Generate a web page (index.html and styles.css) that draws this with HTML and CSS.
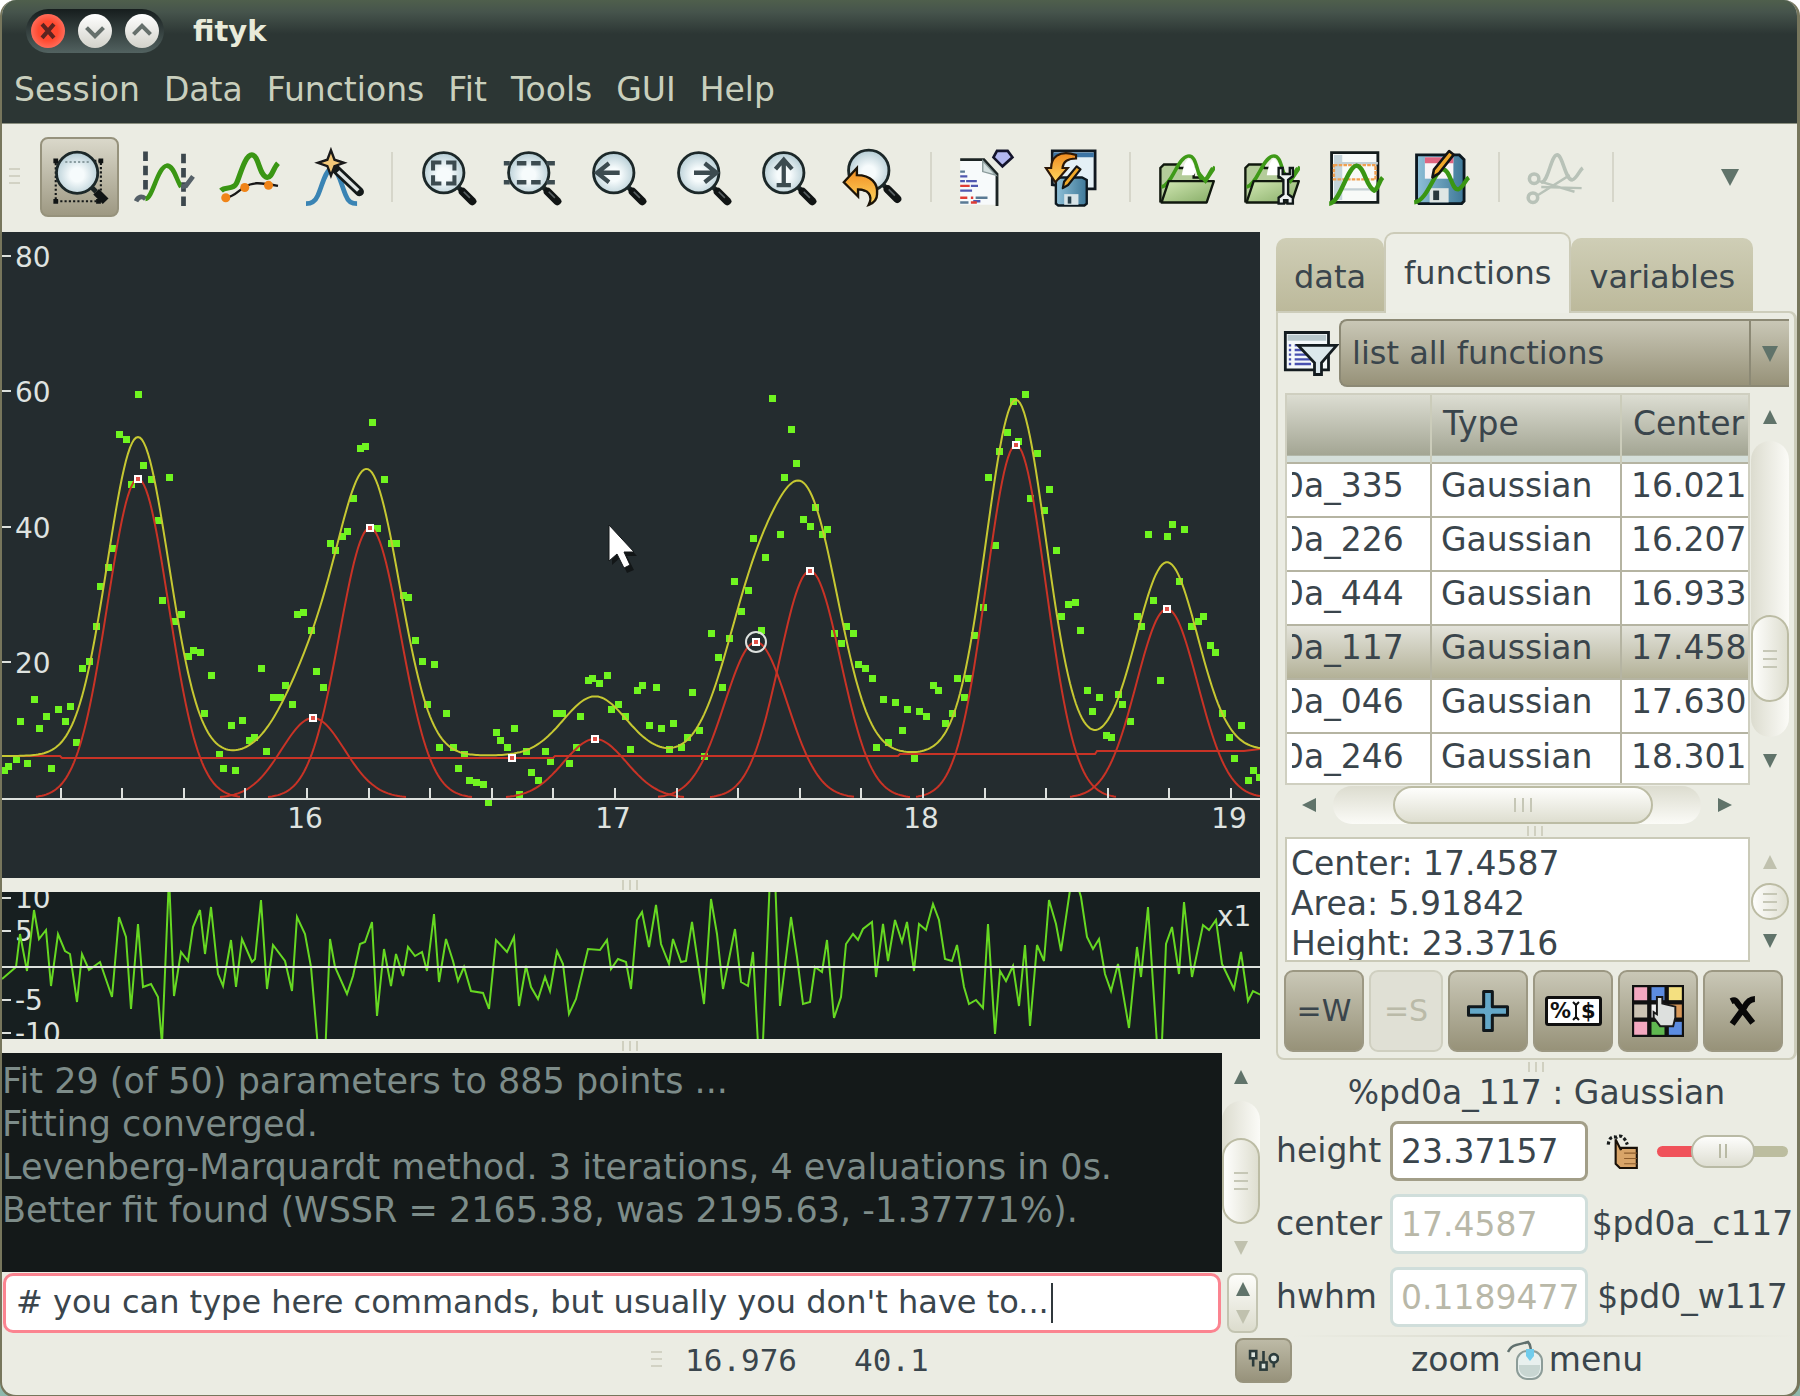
FILE: index.html
```html
<!DOCTYPE html>
<html lang="en">
<head>
    <meta charset="UTF-8">
    <meta name="viewport" content="width=device-width, initial-scale=1.0">
    <title>fityk</title>
    <link rel="stylesheet" href="styles.css">
</head>
<body>
    <!-- shared icon parts -->
    <svg class="defs" width="0" height="0" aria-hidden="true">
        <defs>
            <radialGradient id="glass" cx="50%" cy="55%" r="55%">
                <stop offset="0.3" stop-color="#f6fbfc"/>
                <stop offset="1" stop-color="#b4ccd4"/>
            </radialGradient>
            <linearGradient id="orange" x1="0" y1="0" x2="0" y2="1">
                <stop offset="0" stop-color="#f08a20"/>
                <stop offset="1" stop-color="#ffd860"/>
            </linearGradient>
            <linearGradient id="folder" x1="0" y1="0" x2="1" y2="1">
                <stop offset="0" stop-color="#d2e8b4"/>
                <stop offset="1" stop-color="#86ac66"/>
            </linearGradient>
            <linearGradient id="steel" x1="0" y1="0" x2="1" y2="0">
                <stop offset="0" stop-color="#8fc0d8"/>
                <stop offset="1" stop-color="#3e7898"/>
            </linearGradient>
            <symbol id="lens" viewBox="0 0 24 24">
                <path d="M16 16l2 2" stroke="#1c2424" stroke-width="2"/>
                <path d="M18 18l4 4" stroke="#101414" stroke-width="3.4" stroke-linecap="round"/>
                <path d="M18.4 18l2.6 2.6" stroke="#5a6264" stroke-width="0.7"/>
                <circle cx="10" cy="10" r="8.5" fill="url(#glass)" stroke="#1c2829" stroke-width="1.2"/>
            </symbol>
            <symbol id="open" viewBox="0 0 24 24">
                <path d="M1 22V8l1.500-1.500h5.500l1 1.500h6v4h3v10z" fill="#b4cc9a" stroke="#10180e" stroke-width="1"/>
                <path d="M10 11q1-6 3-7 2 1 3 5.500l-1 1.500z" fill="#fff"/>
                <path d="M1.500 16C6 15 8 4 12.500 3S16 13 19.500 13c1.500-.5 2-3 3.500-5" fill="none" stroke="#3f9a18" stroke-width="1.500"/>
                <path d="M4.500 13.500h19l-3 9H1.500z" fill="url(#folder)" stroke="#10180e" stroke-width="1" stroke-linejoin="round"/>
                <path d="M17 10l3 3.500 4-6" fill="none" stroke="#3f9a18" stroke-width="1.500"/>
            </symbol>
            <symbol id="pencil" viewBox="0 0 10 12">
                <path d="M1 11l.6-3L7.500.8l1.800 1.400L3.500 9.500z" fill="#f0a828" stroke="#141414" stroke-width="1" stroke-linejoin="round"/>
            </symbol>
        </defs>
    </svg>

    <div class="window">
        <header class="titlebar">
            <div class="winbuttons">
                <button class="wb close" aria-label="Close"><svg viewBox="0 0 20 20"><path d="M6.500 6l7 8M13.500 6l-7 8"/></svg></button>
                <button class="wb" aria-label="Minimize"><svg viewBox="0 0 20 20"><path d="M5 8l5 5 5-5"/></svg></button>
                <button class="wb" aria-label="Maximize"><svg viewBox="0 0 20 20"><path d="M5 12l5-5 5 5"/></svg></button>
            </div>
            <h1>fityk</h1>
        </header>
        <nav class="menubar">
            <button>Session</button>
            <button>Data</button>
            <button>Functions</button>
            <button>Fit</button>
            <button>Tools</button>
            <button>GUI</button>
            <button>Help</button>
        </nav>

        <div class="toolbar">
            <span class="grip-v"></span>
            <button class="tool active" aria-label="Zoom mode"><svg viewBox="0 0 24 24">
                <rect x="2" y="5" width="19" height="17" fill="none" stroke="#141818" stroke-width="0.900" stroke-dasharray="0.9 0.9"/>
                <path d="M17 16l2 2" stroke="#1c2424" stroke-width="2"/>
                <path d="M19 18l4 4" stroke="#101414" stroke-width="3.400"/>
                <circle cx="11" cy="10" r="8.700" fill="url(#glass)" stroke="#1c2829" stroke-width="1.200"/>
                <path d="M6 5.500h10" stroke="#8a9ca0" stroke-width="0.800" stroke-dasharray="0.9 0.9"/>
                <path d="M1 4h2v2H1zM20 4h2v2h-2zM1 21h2v2H1zM19 21h2v2h-2z" fill="#101414"/>
            </svg></button>
            <button class="tool" aria-label="Range mode"><svg viewBox="0 0 24 24">
                <path d="M4 1v18M20 2v22" stroke="#3c474d" stroke-width="2" stroke-dasharray="4 2"/>
                <path d="M0 22q1.500-3 4-1" fill="none" stroke="#556068" stroke-width="2"/>
                <path d="M4 21c3 0 5-13.500 9-14 3 0 4 6 6 9" fill="none" stroke="#3a9614" stroke-width="1.900"/>
                <path d="M19 16l2-.5L24 11.500" fill="none" stroke="#556068" stroke-width="2"/>
            </svg></button>
            <button class="tool" aria-label="Baseline mode"><svg viewBox="0 0 24 24">
                <path d="M0 17.500c2-2 5 0 6.500-3S10 2.500 13 2.500s3 9 6.500 9.500c2 0 2.500-4 4.500-6" fill="none" stroke="#3a9614" stroke-width="2.200"/>
                <path d="M2 20.500c4-.5 5-3 8-4.500 3-2 6-2 14-.5" fill="none" stroke="#181818" stroke-width="1"/>
                <g fill="#f08418"><circle cx="2" cy="20.500" r="1.900"/><circle cx="10" cy="16.200" r="1.900"/><circle cx="20" cy="15.300" r="1.900"/></g>
            </svg></button>
            <button class="tool" aria-label="Add peak"><svg viewBox="0 0 24 24">
                <path d="M0 23q3.500 0 5-3.500C7 15 8 9 11 8c3 1 4 8 6 12q1 3 4.500 3" fill="none" stroke="#3a84b4" stroke-width="2"/>
                <path d="M12 8l10.500 10" stroke="#141a1a" stroke-width="3.800" stroke-linecap="round"/>
                <path d="M13.500 9.500l8.500 8" stroke="#dfe5e4" stroke-width="1.500"/>
                <path d="M10.500 0.500L12 4.500l4 1.300-4 1.400-1.500 4-1.500-4-4-1.400 4-1.300z" fill="#f4c878" stroke="#1a1a1a" stroke-width="1"/>
            </svg></button>
            <span class="sep"></span>
            <button class="tool" aria-label="Whole"><svg viewBox="0 0 24 24"><use href="#lens"/>
                <path d="M5.500 9V5.700H9M11 5.700h3.500V9M14.500 11v3.500H11M9 14.500H5.500V11" fill="none" stroke="#3c4b50" stroke-width="1.700"/></svg></button>
            <button class="tool" aria-label="Vertical fit"><svg viewBox="0 0 24 24"><use href="#lens"/>
                <path d="M-.5 6h2.500M5 6h4M11 6h4M17.500 6H21M-.5 14h2.500M5 14h4M11 14h4M17.500 14H21" stroke="#3c4b50" stroke-width="1.800"/></svg></button>
            <button class="tool" aria-label="Scroll left"><svg viewBox="0 0 24 24"><use href="#lens"/>
                <path d="M12.500 10H4M8 6l-5 4 5 4" fill="none" stroke="#3c4b50" stroke-width="1.800"/></svg></button>
            <button class="tool" aria-label="Scroll right"><svg viewBox="0 0 24 24"><use href="#lens"/>
                <path d="M8 10h8.500M12.500 6l5 4-5 4" fill="none" stroke="#3c4b50" stroke-width="1.800"/></svg></button>
            <button class="tool" aria-label="Extend zoom"><svg viewBox="0 0 24 24"><use href="#lens"/>
                <path d="M10 15V5M6.500 8.500L10 4.500l3.500 4M7 15.200h6" fill="none" stroke="#3c4b50" stroke-width="1.800"/></svg></button>
            <button class="tool" aria-label="Previous zoom"><svg viewBox="0 0 24 24"><use href="#lens" y="-1"/>
                <path d="M-.5 14L5 8v3c6 0 9 3.500 8.500 8 0 2-1 3.500-3.500 4.500C12 19.500 9.500 17 5.500 17v3z" fill="url(#orange)" stroke="#1c1408" stroke-width="1"/></svg></button>
            <span class="sep"></span>
            <button class="tool" aria-label="Execute script"><svg viewBox="0 0 24 24">
                <path d="M.5 4.500H11l5 5.500v13.500H.5z" fill="#f7fafb"/>
                <path d="M.5 4.500H10.500l5.500 6v13.500" fill="none" stroke="#1c2424" stroke-width="1.200"/>
                <path d="M10 5v4.500l5.500 1.500z" fill="#d4e0e0" stroke="#8a9a9a" stroke-width=".6"/>
                <path d="M.5 11.500h3M3 13.500h4.500M.500 13.500h2M5 15.500h3M.5 17.500h5M6 22h3" stroke="#5058b0" stroke-width="1"/>
                <path d="M.5 15.500h4M.5 20.500h3M5 20.500h1M5 22.500h2.500" stroke="#e03c34" stroke-width="1"/>
                <path d="M.5 9.500h2M.5 22.500h3.500M7 20.500h5" stroke="#5a7a94" stroke-width="1"/>
                <path d="M16 .8h4.500l2 2.700-4.200 3.800-3.800-3.800z" fill="#b4b8f0" stroke="#14142c" stroke-width="1.100"/>
            </svg></button>
            <button class="tool" aria-label="Save session"><svg viewBox="0 0 24 24">
                <path d="M3.500.800h18v16H18L3.500 15z" fill="#e4f0f6" stroke="#101820" stroke-width="1.200"/>
                <path d="M4 1.500h17v2H4z" fill="#3c74a4"/>
                <path d="M5 13l2-1h9l2 1v10l-1 .8H6L5 23z" fill="url(#steel)" stroke="#0c1820" stroke-width="1"/>
                <path d="M8.500 19h6v4.500h-6z" fill="#d8e4e8"/><path d="M10 20h1.500v3H10z" fill="#28404c"/>
                <path d="M13.500 2.500C6 0 3 4 3 8H.8l4 6L10 8H7.800C8 5.500 10 4 13.500 4z" fill="url(#orange)" stroke="#2c1808" stroke-width=".9"/>
                <use href="#pencil" x="7" y="6.500" width="9" height="11"/>
            </svg></button>
            <span class="sep"></span>
            <button class="tool" aria-label="Load file"><svg viewBox="0 0 24 24"><use href="#open"/></svg></button>
            <button class="tool" aria-label="Load file (custom)"><svg viewBox="0 0 24 24"><use href="#open"/>
                <path d="M15 8v3.500l2 1.500v6l-2 1.500V23h2.300v-1.500h1.400V23H21v-2.500L19 19v-6l2-1.500V8h-1.300v2.500h-3V8z" fill="#eef2f2" stroke="#101818" stroke-width="1"/></svg></button>
            <button class="tool" aria-label="Edit data"><svg viewBox="0 0 24 24">
                <path d="M1.500 1.500H21v21H1.500z" fill="#f8faf8" stroke="#141c1c" stroke-width="1.200"/>
                <path d="M2.500 2.500h3.500v19H2.500z" fill="#c4d4da"/>
                <path d="M3 6h18M6 17h15" stroke="#c4d0d4" stroke-width="1"/>
                <path d="M2.500 6.800h17.500v6H2.500z" fill="none" stroke="#f0a050" stroke-width="1" stroke-dasharray="1.500 .5"/>
                <path d="M.5 23C5 23 8 7.500 12 7c3.500.5 4 9 7.500 10.500 1.500-.5 2-4 3.500-5.500" fill="none" stroke="#3a9614" stroke-width="1.900"/>
            </svg></button>
            <button class="tool" aria-label="Save data"><svg viewBox="0 0 24 24">
                <path d="M1.500 2.500h18l2 2v17.500l-1 1H2.500l-1-1z" fill="url(#steel)" stroke="#0c1820" stroke-width="1.200"/>
                <path d="M5 3.500h12v9H5z" fill="#f8f4f6"/><path d="M5 3.500h12v2.500H5z" fill="#e06480"/>
                <path d="M7 16.500h8v6H7z" fill="#dfe6e4"/><path d="M8.500 17.500H11v4H8.500z" fill="#28383c"/>
                <path d="M.5 22.500C6 22 9 9 12.500 8.500 16 9 16 17 19 17c2-.5 3-4 4.500-5" fill="none" stroke="#3a9614" stroke-width="1.800"/>
                <use href="#pencil" x="7" y="0" width="11" height="13"/>
            </svg></button>
            <span class="sep"></span>
            <button class="tool" aria-label="Strip background" disabled><svg viewBox="0 0 24 24" fill="none" stroke="#b8c2b8" stroke-width="1.500">
                <path d="M6 14c3 0 4-11 6.500-11.500S16 13 19 13c2-.5 3-4 4.500-5"/>
                <circle cx="3" cy="12.500" r="2"/><circle cx="2.500" cy="20.500" r="2"/>
                <path d="M5 13.500L20 18M4.500 19.500L18 11M6 16l17 .5" stroke-width="1"/>
            </svg></button>
            <span class="sep"></span>
            <button class="overflow" aria-label="More tools"><i class="tri down"></i></button>
        </div>

        <main class="main">
            <section class="left">
                <svg class="plot" id="plot" viewBox="2 232 1258 646"></svg>
                <div class="sash"><span class="grip"></span></div>
                <svg class="plot resid" id="resid" viewBox="2 892 1258 147"></svg>
                <div class="sash"><span class="grip"></span></div>
                <div class="console">
                    <pre class="log">Fit 29 (of 50) parameters to 885 points ...
Fitting converged.
Levenberg-Marquardt method. 3 iterations, 4 evaluations in 0s.
Better fit found (WSSR = 2165.38, was 2195.63, -1.37771%).</pre>
                    <div class="vscroll log-scroll">
                        <button aria-label="Scroll up"><i class="tri up"></i></button>
                        <div class="track"><div class="thumb"></div></div>
                        <button aria-label="Scroll down" disabled><i class="tri down"></i></button>
                    </div>
                </div>
                <div class="command">
                    <div class="entry">
                        <input type="text" aria-label="Command" value="# you can type here commands, but usually you don't have to...">
                        <span class="caret"></span>
                    </div>
                    <div class="spin">
                        <button aria-label="Previous command"><i class="tri up"></i></button>
                        <button aria-label="Next command" disabled><i class="tri down"></i></button>
                    </div>
                </div>
            </section>

            <aside class="side">
                <div class="tabs">
                    <button class="tab">data</button>
                    <button class="tab selected">functions</button>
                    <button class="tab">variables</button>
                </div>
                <div class="panel">
                    <div class="filter">
                        <svg viewBox="0 0 24 20">
                            <path d="M1 1h18.500v16H1z" fill="#f4f8fa" stroke="#141c20" stroke-width="1.200"/>
                            <path d="M2 2h16.500v2.500H2z" fill="#b8c8cc"/>
                            <path d="M2.500 6.500h1M2.500 8.500h1M2.500 10.500h1M2.500 12.500h1M2.500 14.500h1M5 6.500h7M5 8.500h5M5 10.500h5M5 12.500h7M5 14.500h7" stroke="#4850b0" stroke-width="1"/>
                            <path d="M6.500 6.500h16.500l-6.500 7.500v5h-3v-5z" fill="#dce8ec" stroke="#141c20" stroke-width="1.200"/>
                        </svg>
                        <div class="combo">
                            <select aria-label="Function filter"><option>list all functions</option></select>
                            <i class="tri down"></i>
                        </div>
                    </div>
                    <div class="listrow">
                        <div class="list">
                            <table>
                                <thead><tr><th class="c-name"></th><th class="c-type">Type</th><th>Center</th></tr></thead>
                                <tbody>
                                    <tr><td><span>0a_335</span></td><td>Gaussian</td><td>16.021</td></tr>
                                    <tr><td><span>0a_226</span></td><td>Gaussian</td><td>16.207</td></tr>
                                    <tr><td><span>0a_444</span></td><td>Gaussian</td><td>16.933</td></tr>
                                    <tr class="sel"><td><span>0a_117</span></td><td>Gaussian</td><td>17.458</td></tr>
                                    <tr><td><span>0a_046</span></td><td>Gaussian</td><td>17.630</td></tr>
                                    <tr><td><span>0a_246</span></td><td>Gaussian</td><td>18.301</td></tr>
                                </tbody>
                            </table>
                        </div>
                        <div class="vscroll list-scroll">
                            <button aria-label="Scroll up"><i class="tri up"></i></button>
                            <div class="track"><div class="thumb"></div></div>
                            <button aria-label="Scroll down"><i class="tri down"></i></button>
                        </div>
                    </div>
                    <div class="hscroll">
                        <button aria-label="Scroll left"><i class="tri left"></i></button>
                        <div class="track"><div class="thumb"></div></div>
                        <button aria-label="Scroll right"><i class="tri right"></i></button>
                    </div>
                    <div class="sash"><span class="grip"></span></div>
                    <div class="listrow">
                        <div class="info">
                            <div>Center: 17.4587</div>
                            <div>Area: 5.91842</div>
                            <div>Height: 23.3716</div>
                        </div>
                        <div class="vscroll info-scroll">
                            <button aria-label="Scroll up" disabled><i class="tri up"></i></button>
                            <div class="track"><div class="thumb"></div></div>
                            <button aria-label="Scroll down"><i class="tri down"></i></button>
                        </div>
                    </div>
                    <div class="actions">
                        <button>=W</button>
                        <button class="same" disabled>=S</button>
                        <button aria-label="Add"><svg viewBox="0 0 24 24"><path d="M10 3h4v7h7v4h-7v7h-4v-7H3v-4h7z" fill="#64a8c8" stroke="#10181c" stroke-width="1.400" stroke-linejoin="round"/></svg></button>
                        <button aria-label="Rename"><svg class="rename" viewBox="0 0 57 30"><rect x="1.500" y="1.500" width="54" height="27" rx="2" fill="#fff" stroke="#101010" stroke-width="3"/><text x="5" y="22">%</text><path d="M28 6l3 3 3-3M28 24l3-3 3 3M31 8v14" fill="none" stroke="#101010" stroke-width="2"/><text x="36" y="22">$</text></svg></button>
                        <button aria-label="Colors"><svg viewBox="0 0 24 24">
                            <path d="M0 0h24v24H0z" fill="#101010"/>
                            <path d="M1 1h6v6H1zM1 17h6v6H1z" fill="#f4a8c0"/><path d="M9 1h6v6H9z" fill="#5c8ce0"/><path d="M17 1h6v6h-6z" fill="#f4e080"/>
                            <path d="M1 9h6v6H1z" fill="#ccc4b4"/><path d="M9 9h6v6H9z" fill="#f0f0f0"/><path d="M17 9h6v6h-6z" fill="#d89858"/><path d="M9 17h6v6H9z" fill="#60b850"/><path d="M17 17h6v6h-6z" fill="#5c8ce0"/>
                            <path d="M11.500 5.500v8l-1.500-1v2.500l3 4h6l1-4v-5l-2-.5-2-.5-2-.5V5.500z" fill="#dde0de" stroke="#181818" stroke-width=".9"/>
                        </svg></button>
                        <button aria-label="Delete"><svg viewBox="0 0 24 24"><path d="M6.500 7.500q2-1 3 1l7 9M17.500 6.500q-3 0-5 4l-5.500 7.500" fill="none" stroke="#080808" stroke-width="2.800"/></svg></button>
                    </div>
                </div>
                <div class="sash"><span class="grip"></span></div>
                <h2>%pd0a_117 : Gaussian</h2>
                <form class="params">
                    <label for="height">height</label>
                    <input type="text" id="height" value="23.37157">
                    <div class="adjust">
                        <svg viewBox="0 0 30 34"><path d="M2 11Q3 2 10 4q6-4 10 7" fill="none" stroke="#181c1c" stroke-width="3" stroke-dasharray="3 2"/><path d="M9 6l5 10V14h15v19H13l-4-4V12z" fill="#d8a468" stroke="#181008" stroke-width="2"/><path d="M17 19h12M17 24h12M17 29h12" stroke="#8c5c2c"/></svg>
                        <input type="range" aria-label="Adjust height" min="0" max="100" value="50">
                    </div>
                    <label for="center">center</label>
                    <input type="text" id="center" value="17.4587" disabled>
                    <span>$pd0a_c117</span>
                    <label for="hwhm">hwhm</label>
                    <input type="text" id="hwhm" value="0.1189477" disabled>
                    <span>$pd0_w117</span>
                </form>
            </aside>
        </main>

        <footer class="status">
            <div class="coords"><span class="grip-v"></span><span>16.976</span><span>40.1</span></div>
            <button class="cfg" aria-label="Configure status bar"><svg viewBox="0 0 30 22" fill="#dce4de" stroke="#2c3c3c" stroke-width="2.500"><path d="M5 8v9M25 12v6M15 2v10"/><rect x="2" y="2" width="6" height="7"/><rect x="12" y="13" width="6" height="7"/><circle cx="25" cy="9" r="4"/></svg></button>
            <div class="hint">zoom<svg viewBox="0 0 36 40"><path d="M1 12Q4 6 9 5t12-3q4 4 2 10" fill="none" stroke="#60706e" stroke-width="2.500"/><rect x="10" y="11" width="25" height="28" rx="10" fill="#e8f0ee" stroke="#8c9c98" stroke-width="2"/><path d="M12 25h21v4q-1 8-10 8t-11-8z" fill="#c8d6d2"/><path d="M19 9h8v7l-4 5-4-5z" fill="#70ccec"/></svg>menu</div>
        </footer>
    </div>
    <script src="chart.js"></script>
</body>
</html>
```
FILE: styles.css
```css
* { box-sizing: border-box; }
body { margin: 0; background: linear-gradient(#fff, #8fb8ac); font-family: "DejaVu Sans", sans-serif; font-size: 33px; line-height: 38px; color: #3a454c; }
button, input, select { font: inherit; color: inherit; }
button { border: 0; padding: 0; background: none; }
h1, h2 { margin: 0; }
svg { display: block; }
.defs { position: absolute; }

.window { display: flex; flex-direction: column; min-height: 100vh; border: solid #77765c; border-width: 0 3px 3px 2px; border-radius: 16px; background: #ebece3; overflow: hidden; }

/* title and menu */
.titlebar { display: flex; align-items: center; gap: 29px; height: 62px; padding-left: 24px; background: linear-gradient(#4f5f4c 0, #46544c 12px, #2c3634 34px); }
.titlebar h1 { font-size: 29px; color: #e9ebda; }
.winbuttons { display: flex; gap: 13px; padding: 5px; border-radius: 22px; background: linear-gradient(#161d1d, #526260); }
.wb { width: 34px; height: 34px; border-radius: 50%; background: linear-gradient(#fff, #d2d2ca); }
.wb svg { fill: none; stroke: #66706c; stroke-width: 2.4; }
.wb.close { background: radial-gradient(#ff4a30 40%, #ff8a80); }
.wb.close svg { stroke: #5c2420; }
.menubar { display: flex; gap: 24px; padding: 9px 12px 14px; background: #2c3634; color: #c9cfbd; }

/* toolbar */
.toolbar { display: flex; align-items: center; gap: 6px; height: 109px; padding: 0 48px 2px 7px; border-top: 1px solid #8a8f80; }
.tool { width: 79px; height: 80px; padding: 0 11px; border-radius: 8px; }
.tool svg { width: 57px; height: 57px; overflow: visible; }
.tool.active { background: linear-gradient(#dad8ca, #9e9983); border: 2px solid #96927c; padding: 0 9px; }
.sep { width: 23px; height: 50px; background: linear-gradient(#d6d6ca, #d6d6ca) center / 2px 100% no-repeat; }
.overflow { margin-left: auto; padding: 10px; }
.grip-v { width: 11px; height: 18px; background: repeating-linear-gradient(#d2d2c4 0 2px, transparent 2px 7px); }
.toolbar .grip-v { margin-right: 14px; }

.tri { display: block; width: 0; height: 0; border: 7px solid transparent; color: #60736a; }
.tri.down { border-top: 14px solid; border-bottom: 0; }
.tri.up { border-bottom: 14px solid; border-top: 0; }
.tri.left { border-right: 14px solid; border-left: 0; }
.tri.right { border-left: 14px solid; border-right: 0; }
.overflow .tri { border-width: 17px 9px 0; }
:disabled .tri { color: #c0c1ae; }

/* main area */
.main { display: grid; grid-template-columns: minmax(0, 1fr) 537px; flex: 1; }
.left { display: flex; flex-direction: column; min-width: 0; }
.plot { width: 100%; background: #242c2f; }
.plot text { font-size: 28px; fill: #dfe3e0; }
.resid { background: #171f20; }
.sash { display: flex; justify-content: center; align-items: center; height: 14px; }
.grip { width: 18px; height: 10px; background: repeating-linear-gradient(90deg, #d0d0c0 0 2px, transparent 2px 7px); }
.dot { fill: #70f420; }
.fn { fill: none; stroke: #c93326; stroke-width: 2; }
.sum { fill: none; stroke: #c6c832; stroke-width: 2; }
.axis { stroke: #dde1de; stroke-width: 2; fill: none; }
.res { fill: none; stroke: #66d822; stroke-width: 2; }
.console { display: flex; flex: 1; }
.log { flex: 1; margin: 0; padding-top: 7px; background: #141919; color: #7d8c89; font: 35px/43px "DejaVu Sans", sans-serif; }
.command { display: flex; gap: 6px; padding: 1px 2px 0 1px; }
.entry { position: relative; flex: 1; }
.entry input { width: 100%; height: 60px; padding: 0 10px 2px; border: 3px solid #fb8490; border-radius: 10px; background: #fff; font-size: 32px; outline: 0; }
.caret { position: absolute; left: 1048px; top: 10px; width: 2px; height: 40px; background: #30383c; }
.spin { display: flex; flex-direction: column; justify-content: space-around; align-items: center; width: 31px; border: 2px solid #c3c4b1; border-radius: 8px; background: linear-gradient(#fdfdfa, #dcdccd); }

/* scroll bars */
.vscroll { display: flex; flex-direction: column; align-items: center; width: 38px; }
.vscroll button { display: flex; justify-content: center; align-items: center; width: 100%; height: 48px; }
.track { display: flex; flex: 1; width: 100%; border-radius: 19px; background: linear-gradient(90deg, #dcdccf, #fbfbf7); }
.thumb { width: 100%; border: 2px solid #bcbca4; border-radius: 19px;
         background: repeating-linear-gradient(#c6c7b6 0 2px, transparent 2px 8px) center / 14px 18px no-repeat, linear-gradient(90deg, #fefefc, #deded0); }
.hscroll { display: flex; align-items: center; width: 464px; height: 39px; margin-left: 2px; }
.hscroll button { display: flex; justify-content: center; width: 48px; }
.hscroll .track { height: 38px; background: linear-gradient(#dcdccf, #fbfbf7); }
.hscroll .thumb { width: 260px; margin-left: 60px;
                  background: repeating-linear-gradient(90deg, #c6c7b6 0 2px, transparent 2px 8px) center / 18px 14px no-repeat, linear-gradient(#fefefc, #deded0); }
.log-scroll .thumb { height: 86px; margin-top: 37px; }
.list-scroll .thumb { height: 87px; margin-top: 174px; }
.info-scroll { padding-top: 4px; }
.info-scroll button { height: 42px; }

/* side pane */
.side { padding: 0 0 0 16px; }
.tabs { display: flex; align-items: flex-end; height: 79px; font-size: 32px; }
.tab { height: 73px; padding: 4px 18px 0; border-radius: 10px 10px 0 0; background: linear-gradient(#cfceb6, #bcb99b); }
.tab.selected { position: relative; height: 81px; margin-bottom: -2px; padding: 0 18px 2px; border: 2px solid #cccbb8; border-bottom: 0; background: #edeee6; }
.panel { border: 2px solid #cdcdbb; border-right-width: 3px; border-radius: 0 8px 8px 8px; padding: 6px 5px 6px; }
.filter { display: flex; align-items: center; }
.filter svg { width: 56px; height: 47px; }
.combo { display: flex; flex: 1; align-items: center; height: 68px; border: 2px solid #8c8975; border-right: 0; border-radius: 8px 0 0 8px; background: linear-gradient(#c9c7b6, #979279); overflow: hidden; }
.combo select { flex: 1; height: 100%; padding: 0 11px; border: 0; border-right: 2px solid #8c8975; background: none; font-size: 32px; appearance: none; }
.combo .tri { margin: 2px 11px 0; border-width: 16px 8px 0; }
.listrow { display: flex; gap: 1px; padding-left: 2px; }
.filter + .listrow { padding-top: 6px; }
.list { width: 465px; height: 392px; border: 2px solid #cfcfc0; background: #fff; overflow: hidden; }
.list table { width: 461px; table-layout: fixed; border-collapse: collapse; text-align: left; white-space: nowrap; }
.list th { height: 68px; padding: 0 0 9px 11px; border-left: 2px solid #cbccba; font-weight: normal; background: linear-gradient(#dcddd2, #a3a593 90%, #d5dfda 91%); }
.list .c-name { width: 144px; border-left: 0; }
.list .c-type { width: 190px; }
.list td { height: 54px; padding: 0 0 8px 9px; border: 2px solid #b5b4a2; border-width: 2px 0 0 2px; overflow: hidden; }
.list td:first-child { border-left: 0; padding-left: 5px; }
.list td span { display: block; overflow: hidden; text-indent: -9px; }
.list .sel { background: linear-gradient(#e4e4dc, #b2b096); }
.panel .sash { height: 13px; }
.info { width: 465px; height: 125px; padding: 5px 4px 0; border: 2px solid #cacab8; background: #fff; line-height: 40px; overflow: hidden; }
.actions { display: flex; gap: 5px; padding: 8px 0 0 1px; }
.actions button { display: flex; align-items: center; justify-content: center; width: 80px; height: 82px; border: 2px solid #9c9883; border-radius: 9px; background: linear-gradient(#c9c7b6, #979279); font-size: 30px; }
.actions .same { width: 74px; }
.actions button:disabled { background: #e0e0d5; border-color: #cfcfc0; color: #babaa8; }
.actions svg { width: 52px; height: 52px; }
.actions .rename { width: 57px; height: 30px; }
.rename text { font-size: 21px; font-weight: bold; fill: #101010; }
.side h2 { padding: 0 0 9px; text-align: center; font-size: 33px; font-weight: normal; }
.params { display: grid; grid-template-columns: 114px 198px 1fr; row-gap: 13px; align-items: center; }
.params input[type=text] { width: 198px; height: 60px; padding: 0 8px; border: 3px solid #a29e88; border-radius: 8px; background: #fff; }
.params input:disabled { border-color: #d0dedb; color: #b9b8a8; }
.params > span { text-align: center; }
.adjust { display: flex; align-items: center; justify-content: space-between; padding: 0 9px 0 18px; }
.adjust svg { width: 32px; height: 36px; }
.adjust input { width: 131px; height: 33px; margin: 0; background: none; appearance: none; }
.adjust input::-webkit-slider-runnable-track { height: 11px; border-radius: 6px; background: linear-gradient(90deg, #f0525a 50%, #bcbd9f 50%); }
.adjust input::-webkit-slider-thumb { appearance: none; width: 64px; height: 33px; margin-top: -11px; border: 2px solid #b9baa5; border-radius: 16px;
    background: repeating-linear-gradient(90deg, #b9baa5 0 2px, transparent 2px 6px) center / 8px 14px no-repeat, linear-gradient(#fdfdfb, #deded2); }

/* status bar */
.status { display: grid; grid-template-columns: 1233px 57px 1fr; align-items: center; height: 62px; padding-bottom: 8px; }
.coords { display: flex; align-items: center; padding-left: 649px; gap: 57px; font: 31px/38px "DejaVu Sans Mono", monospace; }
.coords .grip-v { margin-right: -34px; }
.cfg { display: flex; align-items: center; justify-content: center; height: 45px; border: 2px solid #98947e; border-radius: 8px; background: linear-gradient(#bdbaa6, #97927b); }
.cfg svg { width: 31px; }
.hint { display: flex; align-items: center; justify-content: center; gap: 6px; height: 50px; padding-right: 35px; background: linear-gradient(90deg, transparent, #d8d8cb 50%, transparent) top / 100% 2px no-repeat; }
.hint svg { width: 36px; height: 40px; }
```
FILE: chart.js
```js
// screen coordinates: x = 16 is at 307, 308 px per unit; y = 0 is at 798, 6.78 px per unit
const X16 = 307, XUNIT = 308, Y0 = 798, YUNIT = 6.78;
const LEFT = 2, RIGHT = 1260;

// [center, height, hwhm] in pixels
const peaks = [
    [138, 319, 36], [313, 80, 37], [370, 270, 36], [595, 59, 37],
    [756, 156, 37], [810, 227, 36], [1016, 353, 35], [1167, 189, 36]
];
const base = [[2,756],[60,756],[62,758],[553,758],[555,756],[898,756],[900,754],[1095,754],[1097,751],[1244,751],[1260,749]];

const data = [
    4,770, 8,766, 16,759, 20,721, 27,763, 34,699, 39,728, 46,716, 51,768, 58,709, 65,721, 70,706, 76,742, 82,668, 89,661,
    96,626, 100,586, 108,567, 112,548, 119,434, 126,439, 131,484, 138,394, 143,465, 151,479, 158,520, 162,600, 169,477,
    174,621, 181,614, 188,656, 193,650, 200,652, 204,713, 211,675, 219,754, 223,768, 231,725, 235,770, 242,720, 249,740,
    254,737, 261,668, 266,751, 273,697, 280,697, 285,685, 292,704, 297,614, 303,612, 311,630, 316,671, 323,687, 330,543,
    335,550, 342,536, 347,531, 353,498, 360,448, 365,446, 372,422, 377,528, 384,479, 391,543, 396,543, 403,595, 408,597,
    415,640, 422,661, 427,704, 434,664, 439,747, 446,713, 453,747, 458,768, 464,754, 469,780, 476,782, 483,784, 488,802,
    496,732, 500,740, 507,747, 514,728, 519,794, 526,751, 531,772, 538,780, 545,751, 550,761, 556,713, 562,713, 569,763,
    576,747, 580,716, 588,680, 592,678, 599,683, 607,675, 611,709, 618,704, 625,716, 630,749, 637,690, 642,685, 649,725,
    656,687, 661,728, 669,749, 673,723, 681,747, 687,737, 692,692, 699,730, 704,756, 711,633, 718,657, 722,687, 729,638,
    734,581, 741,611, 748,590, 753,538, 761,630, 765,557, 772,398, 780,534, 784,477, 791,429, 796,463, 803,519, 810,526,
    815,507, 822,534, 827,529, 834,633, 841,643, 846,626, 853,633, 858,664, 865,668, 872,678, 876,747, 883,699, 888,742,
    895,702, 902,730, 907,709, 914,758, 919,711, 926,716, 933,685, 938,690, 945,723, 952,713, 957,678, 964,697, 968,678,
    974,635, 983,607, 988,477, 995,545, 999,451, 1007,432, 1013,401, 1018,441, 1025,394, 1030,498, 1037,453, 1044,510,
    1049,489, 1056,550, 1061,616, 1068,604, 1075,602, 1080,630, 1087,690, 1092,711, 1099,697, 1106,735, 1111,737,
    1118,694, 1122,704, 1130,721, 1137,616, 1141,626, 1148,534, 1153,600, 1160,680, 1167,536, 1172,524, 1179,581,
    1184,529, 1191,626, 1198,621, 1203,616, 1210,645, 1215,652, 1222,713, 1229,737, 1234,758, 1241,725, 1248,780,
    1253,770, 1259,777
];

const residuals = "2,979 16,967 20,934 27,971 34,910 39,939 46,930 51,986 58,934 65,951 70,954 77,1002 82,954 89,970 100,962 " +
    "112,997 119,917 126,937 131,1009 138,924 143,987 151,984 158,997 162,1044 169,877 174,996 181,952 188,961 193,927 200,910 " +
    "205,954 211,907 218,974 223,986 231,940 236,987 242,939 252,962 255,959 261,900 267,989 273,945 285,961 292,991 297,917 " +
    "305,934 311,967 320,1071 325,1058 330,939 335,967 347,994 353,976 360,944 365,942 372,922 377,1016 384,949 391,986 " +
    "396,954 403,976 408,947 415,956 422,952 427,971 434,914 439,982 446,939 453,961 458,981 464,967 471,991 483,993 489,1009 " +
    "496,940 507,952 514,937 519,1006 526,966 531,987 538,999 545,977 550,991 557,951 563,964 569,1014 576,999 588,949 " +
    "600,950 607,940 611,969 618,959 626,962 631,989 637,920 642,912 649,947 656,905 661,944 669,964 673,939 681,962 686,961 " +
    "692,922 704,1004 711,899 717,934 723,989 735,929 741,982 748,986 753,952 758,1044 763,1041 770,877 775,877 780,1006 " +
    "791,917 797,957 803,1004 810,1002 815,967 822,972 827,940 834,1018 841,997 846,944 853,934 858,940 863,929 872,922 " +
    "876,977 883,924 888,961 895,920 902,942 907,922 914,971 919,924 926,930 933,904 939,920 945,959 952,961 957,945 964,987 " +
    "969,1004 976,1000 983,1008 988,924 995,1034 1000,971 1006,981 1013,966 1019,1006 1025,945 1030,1026 1037,945 1044,961 " +
    "1049,900 1056,924 1061,951 1070,890 1075,877 1081,897 1087,937 1093,949 1099,939 1105,974 1111,991 1118,964 1129,1028 " +
    "1137,947 1141,977 1148,907 1157,1044 1162,1041 1166,944 1172,927 1179,974 1184,902 1192,977 1203,925 1209,930 1216,920 " +
    "1222,964 1234,989 1241,952 1248,1001 1253,991 1261,995";

function gauss(p, x) {
    const t = (x - p[0]) / p[2];
    return p[1] * Math.exp(-Math.LN2 * t * t);
}

function line(cls, pts) {
    return `<polyline class="${cls}" points="${pts}"/>`;
}

function drawPlot() {
    let s = "";
    for (let i = 0; i < data.length; i += 2) {
        s += `<rect class="dot" x="${data[i] - 3}" y="${data[i + 1] - 3}" width="7" height="7"/>`;
    }
    s += line("fn", base.join(" "));
    for (const p of peaks) {
        const pts = [];
        for (let x = LEFT; x <= RIGHT; x += 2) {
            const v = gauss(p, x);
            if (v > 1) pts.push(x + "," + (Y0 - v).toFixed(1));
        }
        s += line("fn", pts.join(" "));
    }
    const total = [];
    for (let x = LEFT; x <= RIGHT; x += 2) {
        let v = 42 + 6 * Math.pow(x / RIGHT, 3);
        for (const p of peaks) v += gauss(p, x);
        total.push(x + "," + (Y0 - v).toFixed(1));
    }
    s += line("sum", total.join(" "));

    // axes
    s += `<path class="axis" d="M2 799H1260"/>`;
    for (let i = -4; i <= 15; i++) {
        const x = Math.round(X16 + i * XUNIT / 5);
        s += `<path class="axis" d="M${x} 788V799"/>`;
        if (i % 5 === 0) s += `<text x="${x - 2}" y="828" text-anchor="middle">${16 + i / 5}</text>`;
    }
    for (let v = 20; v <= 80; v += 20) {
        const y = Math.round(Y0 - v * YUNIT);
        s += `<path class="axis" d="M2 ${y}H11"/><text x="15" y="${y + 11}">${v}</text>`;
    }

    // peak handles
    for (const [x, y] of peaks.map(p => [p[0], Y0 - p[1]]).concat([[512, 758]])) {
        s += `<rect x="${x - 3}" y="${y - 3}" width="6" height="6" fill="#e05048" stroke="#fff" stroke-width="2"/>`;
    }
    s += `<circle class="axis" cx="756" cy="642" r="10"/>`;
    s += `<path d="M609 526v36l8-7 7 15 7-3-7-14h10z" fill="#000" opacity=".5" transform="translate(3 3)"/>`;
    s += `<path d="M609 525v36l8-7 7 14 6-3-6-13h10z" fill="#fff" stroke="#14181a"/>`;
    document.getElementById("plot").innerHTML = s;
}

function drawResiduals() {
    let s = "";
    [[10, 898], [5, 931], [-5, 1000], [-10, 1033]].forEach(([v, y]) => {
        s += `<path class="axis" d="M2 ${y}H11"/><text x="15" y="${y + 10}">${v}</text>`;
    });
    s += `<text x="1217" y="926">x1</text>`;
    s += line("res", residuals);
    s += `<path class="axis" d="M2 967H1260"/>`;
    document.getElementById("resid").innerHTML = s;
}

drawPlot();
drawResiduals();
```
